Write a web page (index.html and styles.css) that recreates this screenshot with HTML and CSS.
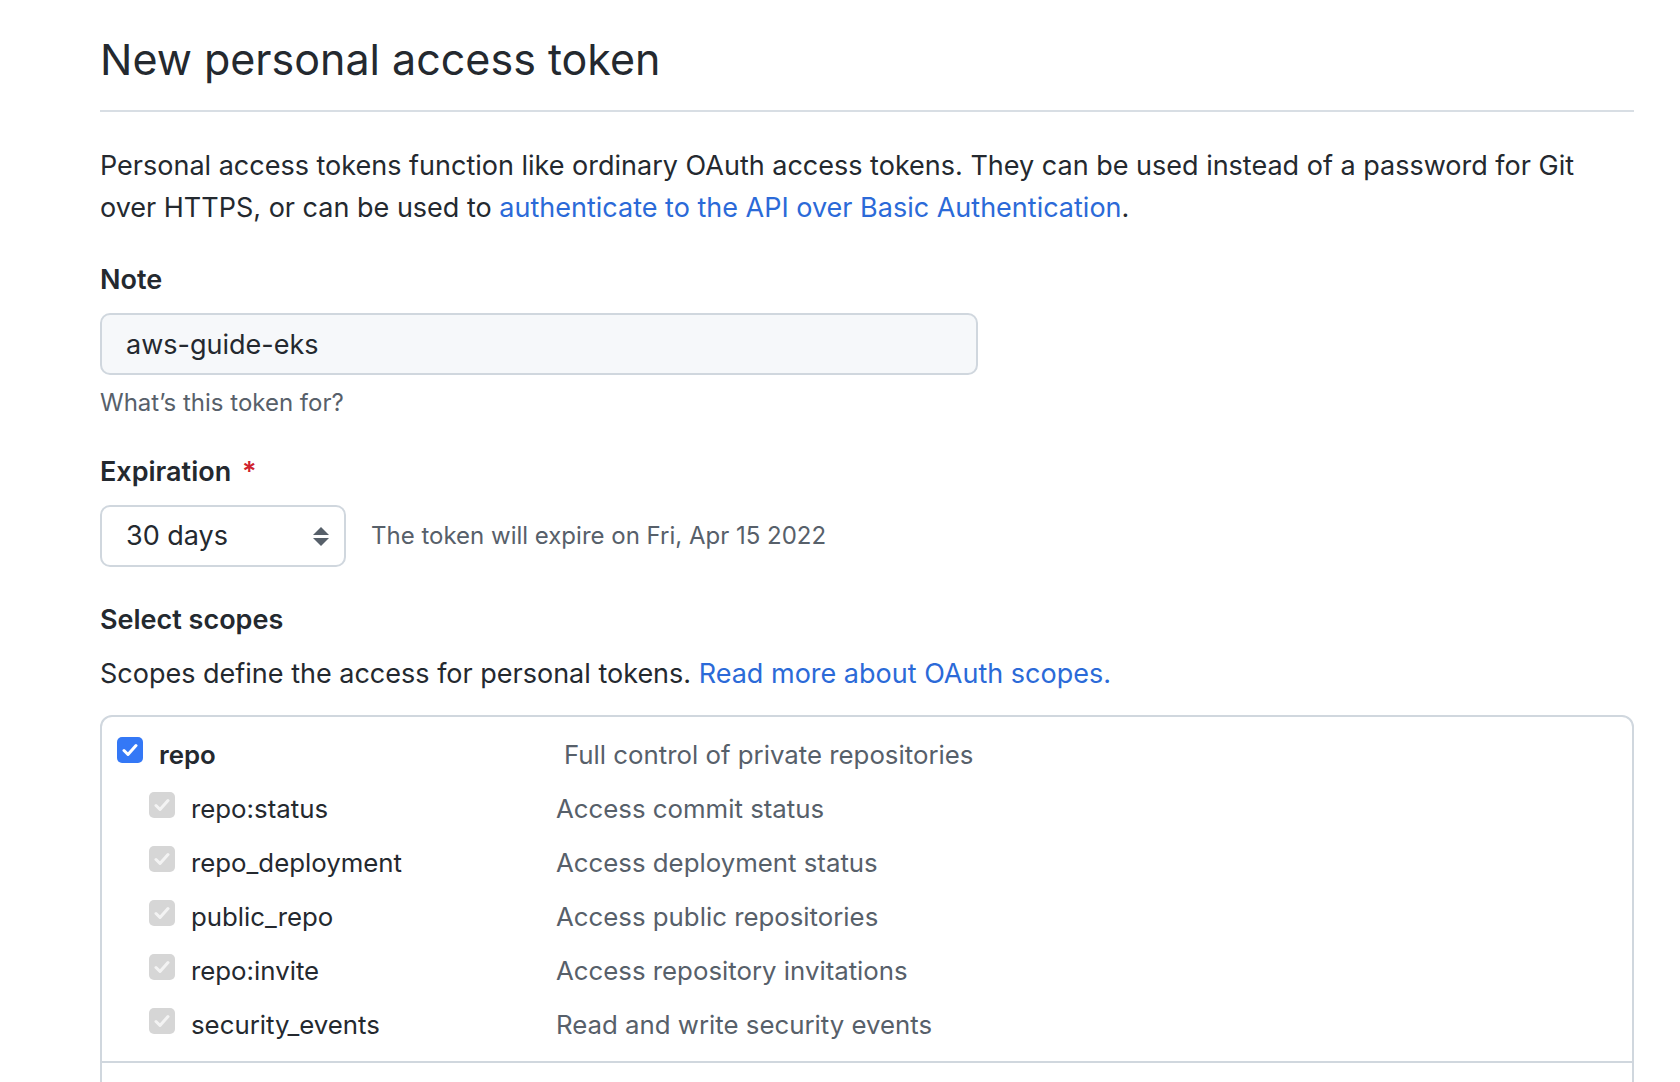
FILE: index.html
```html
<!DOCTYPE html>
<html lang="en">
<head>
<meta charset="utf-8">
<title>New personal access token</title>
<link rel="stylesheet" href="styles.css">
</head>
<body>
<main class="page">
  <h1 class="subhead">New personal access token</h1>
  <p class="intro">Personal access tokens function like ordinary OAuth access tokens. They can be used instead of a password for Git over HTTPS, or can be used to <a href="#" class="link">authenticate to the API over Basic Authentication</a>.</p>

  <div class="form-group">
    <label class="label" for="note">Note</label>
    <input class="text-input" id="note" type="text" value="aws-guide-eks">
    <p class="note note-below">What’s this token for?</p>
  </div>

  <div class="form-group">
    <label class="label label-exp">Expiration <span class="req">*</span></label>
    <div class="exp-row">
      <div class="select">
        <span>30 days</span>
        <svg class="arrows" width="16" height="19" viewBox="0 0 16 19"><path d="M0 8 L16 8 L8 0 Z M0 11 L16 11 L8 19 Z" fill="#57606a"/></svg>
      </div>
      <span class="note">The token will expire on Fri, Apr 15 2022</span>
    </div>
  </div>

  <h3 class="label scopes-title">Select scopes</h3>
  <p class="scopes-intro">Scopes define the access for personal tokens. <a href="#" class="link">Read more about OAuth scopes.</a></p>

  <div class="scopes">
    <div class="group">
      <div class="row parent">
        <span class="cb cb-on"><svg width="16" height="14" viewBox="0 0 16 14"><path d="M2 7.5 L6 11.5 L14 2.5" fill="none" stroke="#fff" stroke-width="3" stroke-linecap="round" stroke-linejoin="round"/></svg></span>
        <span class="name">repo</span>
        <span class="desc">Full control of private repositories</span>
      </div>
      <div class="row child">
        <span class="cb cb-dis"><svg width="16" height="14" viewBox="0 0 16 14"><path d="M2 7.5 L6 11.5 L14 2.5" fill="none" stroke="#f3f3f3" stroke-width="3" stroke-linecap="round" stroke-linejoin="round"/></svg></span>
        <span class="name">repo:status</span>
        <span class="desc">Access commit status</span>
      </div>
      <div class="row child">
        <span class="cb cb-dis"><svg width="16" height="14" viewBox="0 0 16 14"><path d="M2 7.5 L6 11.5 L14 2.5" fill="none" stroke="#f3f3f3" stroke-width="3" stroke-linecap="round" stroke-linejoin="round"/></svg></span>
        <span class="name">repo_deployment</span>
        <span class="desc">Access deployment status</span>
      </div>
      <div class="row child">
        <span class="cb cb-dis"><svg width="16" height="14" viewBox="0 0 16 14"><path d="M2 7.5 L6 11.5 L14 2.5" fill="none" stroke="#f3f3f3" stroke-width="3" stroke-linecap="round" stroke-linejoin="round"/></svg></span>
        <span class="name">public_repo</span>
        <span class="desc">Access public repositories</span>
      </div>
      <div class="row child">
        <span class="cb cb-dis"><svg width="16" height="14" viewBox="0 0 16 14"><path d="M2 7.5 L6 11.5 L14 2.5" fill="none" stroke="#f3f3f3" stroke-width="3" stroke-linecap="round" stroke-linejoin="round"/></svg></span>
        <span class="name">repo:invite</span>
        <span class="desc">Access repository invitations</span>
      </div>
      <div class="row child">
        <span class="cb cb-dis"><svg width="16" height="14" viewBox="0 0 16 14"><path d="M2 7.5 L6 11.5 L14 2.5" fill="none" stroke="#f3f3f3" stroke-width="3" stroke-linecap="round" stroke-linejoin="round"/></svg></span>
        <span class="name">security_events</span>
        <span class="desc">Read and write security events</span>
      </div>
    </div>
    <div class="group group-next"></div>
  </div>
</main>
</body>
</html>
```

FILE: styles.css
```css
* { box-sizing: border-box; }

html, body {
  margin: 0;
  padding: 0;
  background: #ffffff;
  overflow: hidden;
}

body {
  font-family: "Inter", "Liberation Sans", sans-serif;
  color: #24292f;
  font-size: 27px;
  line-height: 42px;
}

.page {
  width: 1534px;
  margin-left: 100px;
  padding-top: 31px;
}

.subhead {
  margin: 0;
  font-size: 43px;
  line-height: 56px;
  font-weight: 400;
  padding-bottom: 23px;
  border-bottom: 2px solid #d8dee4;
}

.intro {
  margin: 33px 0 0;
}

.link {
  color: #2b6ad8;
  text-decoration: none;
}

.form-group {
  margin-top: 30px;
  display: flex;
  flex-direction: column;
  align-items: flex-start;
}

.label {
  display: block;
  font-weight: 600;
  font-size: 27px;
  line-height: 42px;
  margin: 0;
}

.req {
  color: #cf222e;
  margin-left: 4px;
}

.text-input {
  margin-top: 12px;
  width: 878px;
  height: 62px;
  padding: 0 24px;
  border: 2px solid #d0d7de;
  border-radius: 10px;
  background: #f6f8fa;
  font-family: inherit;
  font-size: 27px;
  color: #24292f;
  outline: none;
}

.note {
  font-size: 24px;
  line-height: 34px;
  color: #57606a;
}

.note-below {
  margin: 11px 0 0;
}

.label-exp {
  margin-top: 1px;
}

.exp-row {
  margin-top: 12px;
  display: flex;
  align-items: center;
  gap: 25px;
}

.select {
  width: 246px;
  height: 62px;
  border: 2px solid #d0d7de;
  border-radius: 10px;
  background: #ffffff;
  display: flex;
  align-items: center;
  justify-content: space-between;
  padding: 0 15px 0 24px;
  font-size: 27px;
}

.scopes-title {
  margin-top: 32px;
}

.scopes-intro {
  margin: 12px 0 0;
}

.scopes {
  margin-top: 20px;
  border: 2px solid #d0d7de;
  border-radius: 12px;
}

.group {
  padding: 11px 0 9px 15px;
}

.group-next {
  border-top: 2px solid #d0d7de;
  margin: 0 -2px;
  height: 80px;
}

.row {
  display: flex;
  align-items: center;
  height: 54px;
  font-size: 25.8px;
}

.child {
  padding-left: 32px;
}

.cb {
  width: 26px;
  height: 26px;
  border-radius: 5px;
  display: flex;
  align-items: center;
  justify-content: center;
  flex: none;
  margin-right: 16px;
}

.cb-on {
  background: #3478f6;
  margin-bottom: 10px;
}

.cb-dis {
  background: #d6d6d6;
  margin-bottom: 8px;
}

.name {
  flex: none;
}

.parent .name {
  width: 405px;
  font-weight: 600;
}

.child .name {
  width: 365px;
}

.desc {
  color: #57606a;
}
```
